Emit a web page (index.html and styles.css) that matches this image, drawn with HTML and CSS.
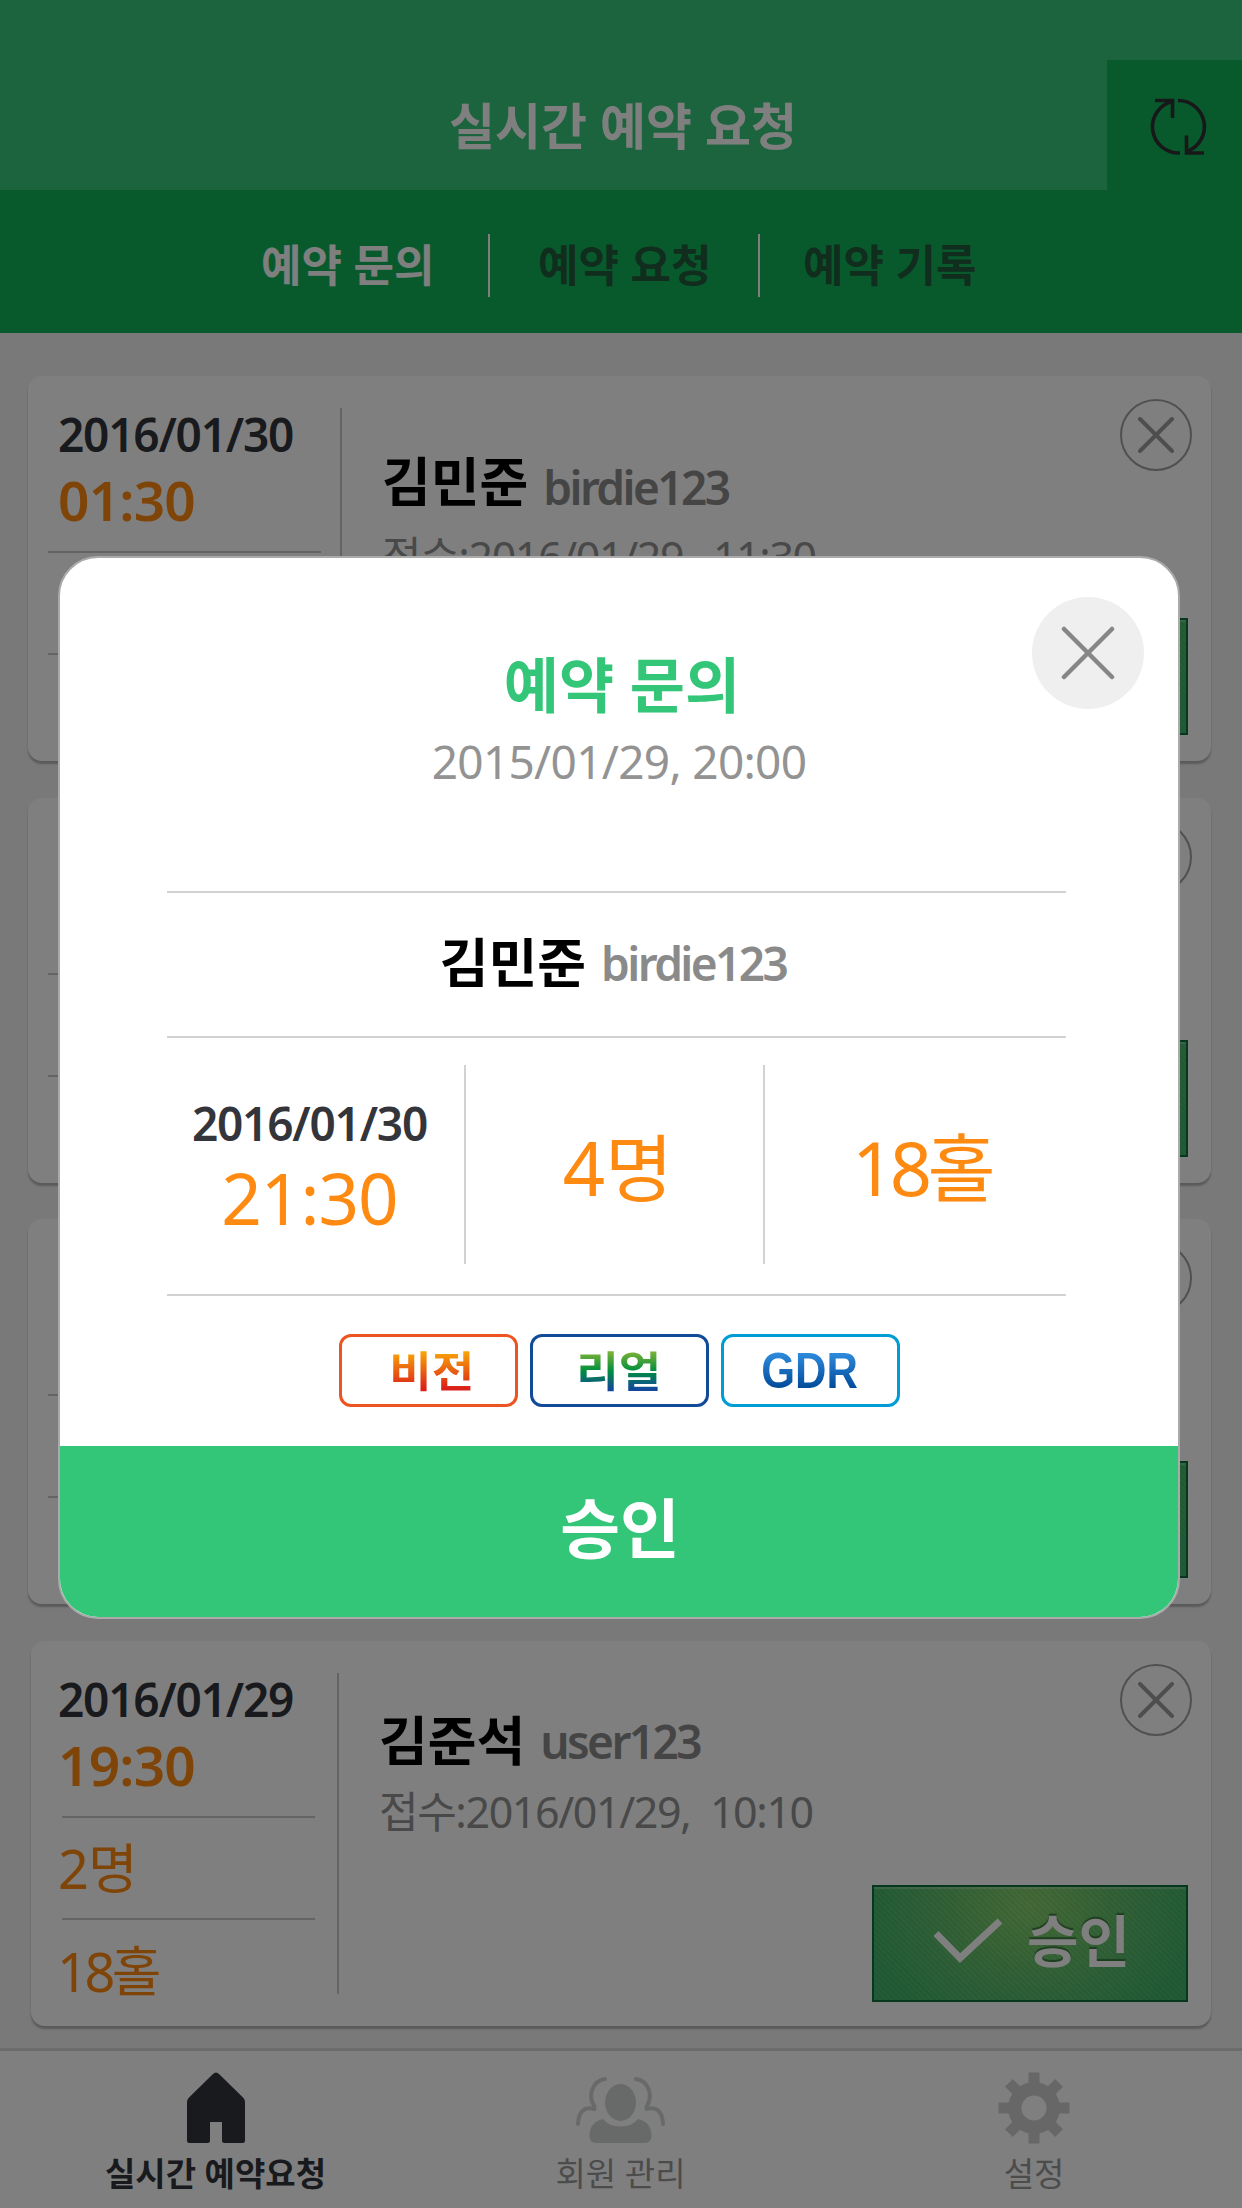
FILE: index.html
```html
<!DOCTYPE html>
<html lang="ko">
<head>
<meta charset="utf-8">
<title>실시간 예약 요청</title>
<link rel="stylesheet" href="styles.css">
</head>
<body>
<svg class="defs" aria-hidden="true">
  <symbol id="close" viewBox="0 0 36 36"><path d="M2 2l32 32M34 2L2 34"/></symbol>
  <symbol id="check" viewBox="0 0 70 46"><path d="M3 16.500L27 41L67 4"/></symbol>
</svg>
<div class="app">
  <header class="header">
    <h1 class="header-title">실시간 예약 요청</h1>
    <button class="refresh" aria-label="refresh">
      <svg width="60" height="60" viewBox="0 0 60 60"><path d="M30 56A26.200 26.200 0 0 1 22 4.500M5 3.500H22.500V21"/><path d="M28 3.500A26.200 26.200 0 0 1 38 54M54 56H36.500V38.500"/></svg>
    </button>
  </header>
  <nav class="tabs">
    <a class="tab tab-on">예약 문의</a>
    <a class="tab">예약 요청</a>
    <a class="tab">예약 기록</a>
  </nav>
  <main class="list">
    <article class="card">
      <div class="slots">
        <div class="slot slot-when"><time class="date">2016/01/30</time><time class="hour">01:30</time></div>
        <div class="slot"></div>
        <div class="slot"></div>
      </div>
      <div class="info">
        <p class="who"><b class="name">김민준</b><span class="uid">birdie123</span></p>
        <p class="received">접수:2016/01/29,&nbsp; 11:30</p>
      </div>
      <div class="actions">
        <button class="dismiss" aria-label="close"><svg><use href="#close"/></svg></button>
        <button class="approve"></button>
      </div>
    </article>
    <article class="card">
      <div class="slots"><div class="slot slot-when"></div><div class="slot"></div><div class="slot"></div></div>
      <div class="info"></div>
      <div class="actions">
        <button class="dismiss" aria-label="close"><svg><use href="#close"/></svg></button>
        <button class="approve"></button>
      </div>
    </article>
    <article class="card">
      <div class="slots"><div class="slot slot-when"></div><div class="slot"></div><div class="slot"></div></div>
      <div class="info"></div>
      <div class="actions">
        <button class="dismiss" aria-label="close"><svg><use href="#close"/></svg></button>
        <button class="approve"></button>
      </div>
    </article>
    <article class="card card-inset">
      <div class="slots">
        <div class="slot slot-when"><time class="date">2016/01/29</time><time class="hour">19:30</time></div>
        <div class="slot"><span class="count">2명</span></div>
        <div class="slot"><span class="count count-holes">18홀</span></div>
      </div>
      <div class="info">
        <p class="who"><b class="name">김준석</b><span class="uid">user123</span></p>
        <p class="received">접수:2016/01/29,&nbsp; 10:10</p>
      </div>
      <div class="actions">
        <button class="dismiss" aria-label="close"><svg><use href="#close"/></svg></button>
        <button class="approve"><svg class="tick"><use href="#check"/></svg><span>승인</span></button>
      </div>
    </article>
  </main>
  <footer class="bottom">
    <a class="dest dest-on">
      <svg width="58" height="72" viewBox="0 0 58 72"><path fill="currentColor" d="M26 2Q29 -1 32 2L56.500 26Q58 28 58 30V68.500Q58 71 55.500 71H37.500Q35 71 35 68.500V50H23V68.500Q23 71 20.500 71H2.500Q0 71 0 68.500V30Q0 28 1.500 26Z"/></svg>
      <span>실시간 예약요청</span>
    </a>
    <a class="dest dest-members">
      <svg width="90" height="72" viewBox="0 0 90 72"><g fill="currentColor"><ellipse cx="44.500" cy="30.500" rx="15.500" ry="18.500"/><path d="M27 47Q33 54.500 44.500 54.500T62 47Q75.500 50 75.500 64Q75.500 71 69 71H20Q13.500 71 13.500 64Q13.500 50 27 47Z"/></g><g fill="none" stroke="currentColor" stroke-width="4" stroke-linecap="round"><path d="M29 7C16 9 11.500 24 18.500 34.500M2 52Q3 33 18.500 37M60 7C73 9 77.500 24 70.500 34.500M87 52Q86 33 70.500 37"/></g></svg>
      <span>회원 관리</span>
    </a>
    <a class="dest dest-settings">
      <svg width="72" height="72" viewBox="-36 -36 72 72"><g fill="currentColor"><path d="M-5.500 -35.500H5.500V35.500H-5.500Z"/><path d="M-5.500 -35.500H5.500V35.500H-5.500Z" transform="rotate(90)"/><path d="M-5.500 -35.500H5.500V35.500H-5.500Z" transform="rotate(45)"/><path d="M-5.500 -35.500H5.500V35.500H-5.500Z" transform="rotate(-45)"/><circle r="26"/></g><circle class="hub" r="12.500"/></svg>
      <span>설정</span>
    </a>
  </footer>
</div>
<div class="scrim">
  <section class="dialog">
    <button class="dialog-close" aria-label="close"><svg><use href="#close"/></svg></button>
    <div class="dialog-body">
      <header class="dialog-head">
        <h2 class="dialog-title">예약 문의</h2>
        <p class="dialog-time">2015/01/29, 20:00</p>
      </header>
      <p class="dialog-who"><b class="name">김민준</b><span class="uid">birdie123</span></p>
      <div class="facts">
        <div class="fact fact-when"><time class="date">2016/01/30</time><time class="big">21:30</time></div>
        <div class="fact fact-people"><span class="big">4명</span></div>
        <div class="fact fact-holes"><span class="big">18홀</span></div>
      </div>
      <div class="badges">
        <span class="badge badge-vision"><b>비전</b></span>
        <span class="badge badge-real"><b>리얼</b></span>
        <span class="badge badge-gdr"><b>GDR</b></span>
      </div>
    </div>
    <button class="confirm">승인</button>
  </section>
</div>
</body>
</html>
```
FILE: styles.css
```css
* { box-sizing: border-box; }
body, h1, h2, p { margin: 0; }
body {
  width: 1242px;
  height: 2208px;
  overflow: hidden;
  font-family: "Noto Sans", "Noto Sans CJK KR", sans-serif;
  white-space: nowrap;
}
button { border: 0; padding: 0; font: inherit; background: none; }
.defs { display: none; }
.app { display: flex; flex-direction: column; height: 2208px; background: #f2f2f2; }

.header { flex: none; display: flex; height: 190px; padding: 60px 0 0 135px; background: #36c87a; }
.header-title { flex: 1; margin: 28px 0 0 4px; font-size: 50px; line-height: 76px; font-weight: 600; text-align: center; color: #fff; }
.refresh { display: flex; width: 135px; height: 130px; padding: 37px 0 0 43px; background: #10b45a; }
.refresh svg { fill: none; stroke: #2f3033; stroke-width: 3.600; }

.tabs { flex: none; display: flex; height: 143px; padding: 44px 0 0 225px; background: #10b45a; }
.tab { width: 265px; height: 63px; padding-left: 36px; border-right: 2px solid #fff; font-size: 44px; line-height: 62px; font-weight: 600; color: #235b3a; }
.tab-on { color: #fff; }
.tab:nth-child(2) { width: 270px; padding-left: 48px; }
.tab:last-child { width: 260px; padding-left: 43px; border: 0; }

.list { flex: 1; min-height: 0; padding: 43px 31px 0 28px; }
.card { display: flex; height: 385px; margin-bottom: 36.600px; border-radius: 14px; background: #fff; box-shadow: 0 3px 2px #b5b5b5; }
.card-inset { margin-left: 3px; }
.slots { width: 314px; height: 321px; margin-top: 32px; border-right: 2px solid #c8c8c8; }
.slot { display: flex; align-items: center; height: 102px; margin: 0 19px 0 20px; padding-left: 10px; border-bottom: 2px solid #c8c8c8; }
.slot:last-child { border: 0; }
.slot-when { flex-direction: column; align-items: flex-start; height: 145px; }
.card-inset .slots { width: 308px; }
.card-inset .slot { margin: 0 22px 0 31px; padding-left: 0; text-indent: -4px; }
.date { margin-top: -4px; font-size: 46px; line-height: 60px; font-weight: 600; letter-spacing: -1.200px; color: #33353a; }
.hour { font-size: 55px; line-height: 72px; font-weight: 600; letter-spacing: -0.800px; color: #ff8a11; }
.count { font-size: 54px; line-height: 72px; font-weight: 400; letter-spacing: -1px; color: #ff8a11; }
.count-holes { letter-spacing: -3.500px; margin-left: -1px; }
.info { flex: 1; padding: 75px 0 0 40px; }
.card-inset .info { padding-top: 69px; }
.who { display: flex; align-items: flex-start; gap: 15px; height: 62px; line-height: 62px; }
.name { font-size: 53px; font-weight: 600; color: #000; }
.uid { margin-top: 5px; font-size: 46px; font-weight: 600; letter-spacing: -2.600px; color: #8a8a8a; }
.card-inset .uid { margin-top: 0; }
.received { margin-top: 14px; font-size: 43px; line-height: 60px; font-weight: 400; letter-spacing: -1.400px; color: #929292; }
.card-inset .received { margin-top: 10px; }
.actions { display: flex; flex-direction: column; align-items: flex-end; justify-content: space-between; width: 316px; margin-right: 23px; padding: 23px 0 26px; }
.card-inset .actions { padding-bottom: 24px; }
.dismiss { display: flex; align-items: center; justify-content: center; width: 72px; height: 72px; margin-right: -4px; border: 2.500px solid #a0a0a0; border-radius: 50%; }
.dismiss svg { width: 36px; height: 36px; fill: none; stroke: #9c9c9c; stroke-width: 4; stroke-linecap: round; }
.approve {
  display: flex; align-items: center; width: 316px; height: 117px; padding: 0 0 6px 59px; gap: 24px;
  border: 2px solid #0a7038;
  background:
    repeating-linear-gradient(45deg, #0000 0 2px, #0000000d 2px 4px),
    radial-gradient(ellipse 170px 140px at 50% 15%, #8cd46e, #66c46e 50%, #44b86e 100%);
  box-shadow: inset 0 2px 1px #ffffff40;
  font-size: 56px; font-weight: 600; line-height: 76px; color: #fff; text-shadow: 0 -2px 1px #3b7a3f;
}
.tick { width: 70px; height: 46px; fill: none; stroke: #fff; stroke-width: 7; }

.bottom { flex: none; display: grid; grid-template-columns: 431px 379px 1fr; height: 160px; border-top: 3px solid #d8d8d8; background: #fff; }
.dest { display: flex; flex-direction: column; align-items: center; padding-top: 21px; font-size: 33px; line-height: 44px; font-weight: 400; color: #999; }
.dest svg { margin-bottom: 8px; }
.dest-on { color: #33353a; font-weight: 600; }
.dest-members svg { color: #d0d5d2; }
.dest-settings { padding-left: 16px; }
.dest-settings svg { color: #cfcfcf; }
.hub { fill: #fff; }

.scrim { position: absolute; inset: 0; display: flex; justify-content: center; align-items: flex-start; padding: 556px 4px 0 0; background: #00000080; }
.dialog { position: relative; display: flex; flex-direction: column; width: 1122px; height: 1063px; border: 2px solid #aaa; border-radius: 40px; overflow: hidden; background: #fff; }
.dialog-close { position: absolute; top: 39px; right: 34px; display: flex; align-items: center; justify-content: center; width: 112px; height: 112px; border-radius: 50%; background: #efefef; }
.dialog-close svg { width: 54px; height: 54px; fill: none; stroke: #868686; stroke-width: 3; stroke-linecap: round; }
.dialog-body { flex: 1; padding: 0 112px 0 107px; }
.dialog-head { height: 335px; padding: 86px 0 0 5px; border-bottom: 2px solid #d2d2d2; text-align: center; }
.dialog-title { padding-left: 6px; font-size: 60px; line-height: 82px; font-weight: 600; color: #34c678; }
.dialog-time { margin-top: 5px; font-size: 46px; line-height: 60px; font-weight: 400; letter-spacing: -0.700px; color: #939393; }
.dialog-who { display: flex; justify-content: center; align-items: flex-start; gap: 15px; height: 145px; padding: 37px 7px 0 0; line-height: 66px; border-bottom: 2px solid #d2d2d2; }
.dialog-who .uid { margin-top: 0; }
.facts { display: grid; grid-template-columns: 299px 299px 1fr; height: 258px; padding: 27px 0 30px; border-bottom: 2px solid #d2d2d2; }
.fact { display: flex; flex-direction: column; align-items: center; padding-top: 57px; border-right: 2px solid #d2d2d2; }
.fact:last-child { border: 0; }
.fact-when { padding-top: 28px; padding-right: 12px; }
.fact-when .date { margin: 0; }
.fact-people { padding-left: 7px; }
.fact-holes { padding-left: 12px; }
.fact-holes .big { letter-spacing: -4.500px; }
.big { font-size: 74px; line-height: 92px; font-weight: 400; color: #ff8a11; }
.fact-when .big { margin-top: -1px; font-size: 71px; letter-spacing: -1px; }
.badges { display: flex; justify-content: center; gap: 12px; padding: 38px 0 0 5px; }
.badge { display: flex; align-items: center; justify-content: center; width: 179px; height: 73px; border: 3px solid; border-radius: 12px; font-size: 42px; line-height: 60px; }
.badge b { color: transparent; background-clip: text; -webkit-background-clip: text; transform: scaleX(1.1); }
.badge-vision { border-color: #ec5521; padding-left: 8px; }
.badge-vision b { background-image: linear-gradient(#f8a008 20%, #d91f1a 80%); }
.badge-real { border-color: #124a9a; }
.badge-real b { background-image: linear-gradient(#75b037 20%, #008e3e 50%, #12489b 80%); }
.badge-gdr { border-color: #009cd5; }
.badge-gdr b { background-image: linear-gradient(#2f8bdc 20%, #004997 80%); font-family: "Liberation Sans", sans-serif; font-size: 50px; transform: scaleX(0.87); }
.confirm { height: 171px; padding: 0 0 7px 2px; background: #34c678; color: #fff; font-size: 65px; line-height: 90px; font-weight: 600; }
```
